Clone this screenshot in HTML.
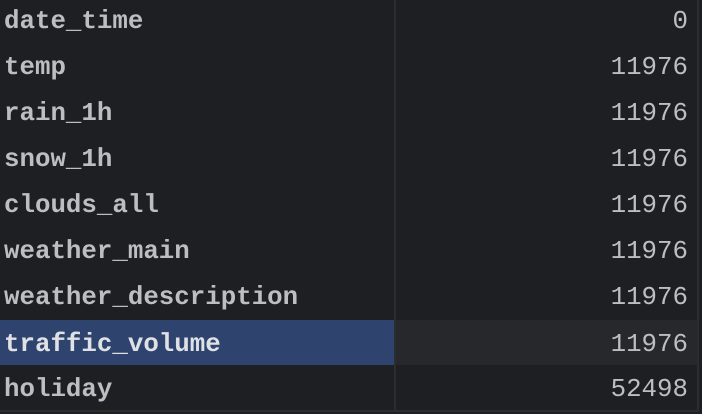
<!DOCTYPE html><html><head><style>
body{margin:0;width:702px;height:414px;background:#1e1f22;overflow:hidden;position:relative;font-family:"Liberation Mono",monospace;color:#bcbec4;font-size:25.8px}
.r{position:absolute;left:0;width:697px;height:46px;line-height:46px}
.k{position:absolute;left:4px;top:2px;font-weight:bold}
.v{position:absolute;right:9px;top:2px}
.sel .k{color:#dfe1e5}
.vl{position:absolute;left:394px;top:0;width:2px;height:412px;background:#2b2d30}
.rb{position:absolute;left:697px;top:0;width:2px;height:412px;background:#2b2d30}
.bb{position:absolute;left:0;top:410px;width:699px;height:2px;background:#2b2d30}
</style></head><body>
<div class="r" style="top:-3px"><span class="k">date_time</span><span class="v">0</span></div>
<div class="r" style="top:43px"><span class="k">temp</span><span class="v">11976</span></div>
<div class="r" style="top:89px"><span class="k">rain_1h</span><span class="v">11976</span></div>
<div class="r" style="top:135px"><span class="k">snow_1h</span><span class="v">11976</span></div>
<div class="r" style="top:181px"><span class="k">clouds_all</span><span class="v">11976</span></div>
<div class="r" style="top:227px"><span class="k">weather_main</span><span class="v">11976</span></div>
<div class="r" style="top:273px"><span class="k">weather_description</span><span class="v">11976</span></div>
<div class="r sel" style="top:320px;height:45px;background:#26282c"><div style="position:absolute;left:0;top:0;width:394px;height:45px;background:#2e436e"></div><span class="k">traffic_volume</span><span class="v">11976</span></div>
<div class="r" style="top:365px"><span class="k">holiday</span><span class="v">52498</span></div>
<div class="vl"></div><div class="rb"></div><div class="bb"></div>
</body></html>
